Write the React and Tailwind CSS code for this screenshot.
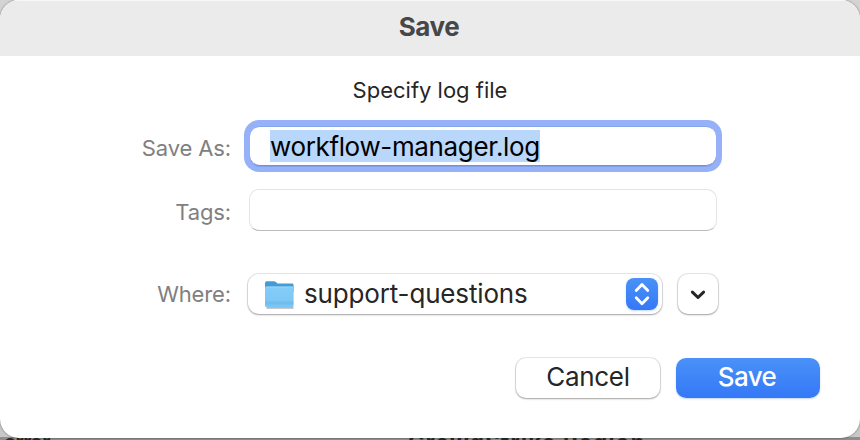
import React from "react";

const label = "w-[231px] shrink-0 text-right text-[22px] leading-[28px] tracking-[-0.12px] text-[#808080]";

function FolderIcon() {
  return (
    <svg width="32" height="30" viewBox="0 0 32 30" className="mt-px shrink-0">
      <defs>
        <linearGradient id="front" x1="0" y1="0" x2="0" y2="1">
          <stop offset="0" stopColor="#86cdf8" />
          <stop offset="1" stopColor="#78c5f4" />
        </linearGradient>
      </defs>
      <path d="M2.5 27.9h27" stroke="#8a8a8a" strokeOpacity=".6" strokeWidth="1.8" />
      <path d="M1 3Q1 1.3 2.7 1.3H10Q11 1.3 11.8 2L13.2 3.2Q13.7 3.6 14.5 3.6H28.2Q29.6 3.6 29.6 5V12H1Z" fill="#469bd4" />
      <path d="M1 8.3Q1 6.6 2.8 6.6H28Q29.6 6.6 29.6 8.3V25.6Q29.6 27.1 28.2 27.1H2.6Q1 27.1 1 25.6Z" fill="url(#front)" />
      <path d="M1.5 7H29.2" stroke="#a3dafb" strokeWidth="0.7" />
      <path d="M1 22H29.6M1 23.8H29.6" stroke="#5eafe2" strokeWidth="0.6" />
    </svg>
  );
}

export default function App() {
  return (
    <div className="relative h-[440px] w-[860px] overflow-hidden bg-[linear-gradient(#d4d2d3,#c8c8c8)] font-[Inter,sans-serif]">
      <div className="absolute inset-x-0 bottom-0 h-[3px] bg-[#8e8e8e]" />
      <div className="absolute left-[4px] top-[430px] text-[20px] font-bold leading-[24px] tracking-[-0.5px] text-[#292929]">error</div>
      <div className="absolute left-[408px] top-[430px] whitespace-nowrap text-[22px] font-bold leading-[24px] tracking-[1.4px] text-[#292929]">CrowdStrike Region</div>

      <div className="relative flex h-[438px] flex-col overflow-hidden rounded-[19px] bg-white shadow-[0_0_2px_rgba(0,0,0,0.55)]">
        <div className="flex h-14 shrink-0 items-center justify-center border-t border-[#f8f8f8] bg-[#ebebeb] pb-[3px] pr-[2px] text-[26px] font-bold leading-8 tracking-[-0.4px] text-[#474747]">
          <span>Save</span>
        </div>
        <div className="mt-5 text-center text-[22px] leading-7 text-[#262626]">
          <span>Specify log file</span>
        </div>

        <div className="mt-[16px] flex h-[52px] items-center">
          <div className={label + " pt-1"}>Save As:</div>
          <div className="ml-[13px] flex h-[52px] w-[478px] items-center rounded-[15px] bg-[#96b1f8] p-[6px]">
            <div className="flex h-[40px] w-full items-center rounded-[10px] border-y border-t-[#86a3ec] border-b-[#708fdf] bg-white pl-5 shadow-[0_1px_0_#829fe9]">
              <span className="h-8 w-[270px] whitespace-nowrap bg-[#b9d6fb] text-[26px] leading-[34px] tracking-[-0.36px] text-black">workflow-manager.log</span>
            </div>
          </div>
        </div>

        <div className="mt-[17px] flex h-[42px] items-center">
          <div className={label + " pt-1"}>Tags:</div>
          <div className="ml-[18px] h-[42px] w-[468px] rounded-[10px] border border-[#e4e4e4] border-b-[#bcbcbc] bg-white" />
        </div>

        <div className="mt-[42px] flex h-[42px] items-center">
          <div className={label}>Where:</div>
          <div className="ml-[17px] flex h-[40px] w-[414px] items-center rounded-[11px] bg-white pl-4 pr-1 shadow-[0_0_0_1px_rgba(0,0,0,0.09),0_1px_2px_rgba(0,0,0,0.3)]">
            <FolderIcon />
            <span className="ml-2 flex-1 whitespace-nowrap text-[26px] leading-8 tracking-[-0.16px] text-[#262626]">support-questions</span>
            <div className="flex size-8 items-center justify-center rounded-[8px] bg-linear-to-b from-[#4b91f8] to-[#3478f6] shadow-[0_1px_2px_rgba(52,120,246,0.3)]">
              <svg width="32" height="32" viewBox="0 0 32 32" fill="none" stroke="white" strokeWidth="2.8" strokeLinecap="round" strokeLinejoin="round">
                <path d="M10.2 12.5L16 6.5L21.8 12.5M10.2 19.8L16 25.8L21.8 19.8" />
              </svg>
            </div>
          </div>
          <div className="ml-4 flex size-10 items-center justify-center rounded-[10px] bg-white shadow-[0_0_0_1px_rgba(0,0,0,0.09),0_1px_2px_rgba(0,0,0,0.3)]">
            <svg width="20" height="20" viewBox="0 0 20 20" fill="none" stroke="#262626" strokeWidth="3" strokeLinecap="round" strokeLinejoin="round">
              <path d="M4.4 8.1L10 13.5L15.6 8.1" />
            </svg>
          </div>
        </div>

        <div className="mt-[43px] flex justify-end gap-4 pr-10 text-[26px]">
          <button className="h-10 w-[144px] rounded-[10px] bg-white pb-[2px] leading-[38px] tracking-[-0.3px] text-[#262626] shadow-[0_0_0_1px_rgba(0,0,0,0.09),0_1px_2px_rgba(0,0,0,0.3)]">Cancel</button>
          <button className="h-10 w-[144px] rounded-[10px] bg-linear-to-b from-[#4b91f8] to-[#3478f6] pb-[2px] pr-[2px] font-medium leading-[38px] tracking-[-0.6px] text-white shadow-[0_1px_2px_rgba(52,120,246,0.3)]">Save</button>
        </div>
      </div>
    </div>
  );
}
